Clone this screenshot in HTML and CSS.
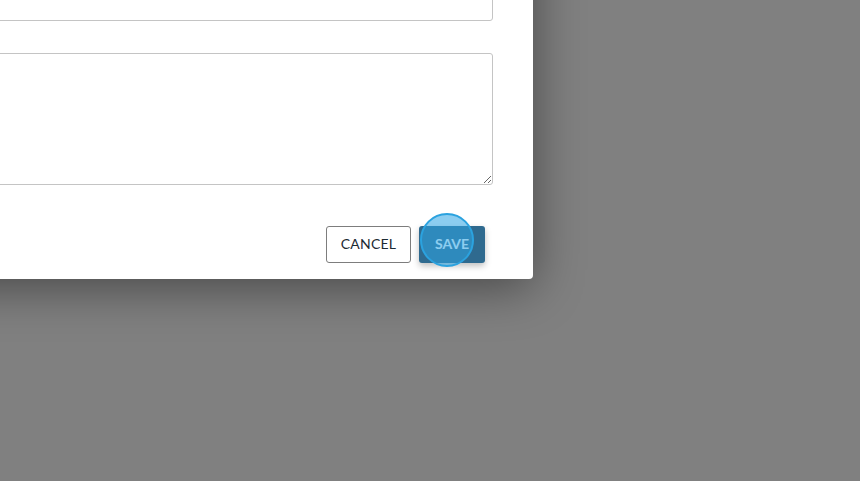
FILE: index.html
```html
<!DOCTYPE html>
<html lang="en">
<head>
  <meta charset="UTF-8">
  <meta name="viewport" content="width=device-width, initial-scale=1.0">
  <title>Edit item</title>
  <link rel="stylesheet" href="styles.css">
</head>
<body>

  <div class="backdrop"></div>

  <div class="modal">
    <form class="modal-form">
      <input class="field" type="text">
      <textarea class="field field-area"></textarea>

      <div class="actions">
        <button type="button" class="btn btn-cancel">CANCEL</button>
        <button type="button" class="btn btn-save">
          SAVE
          <span class="click-marker"></span>
        </button>
      </div>
    </form>
  </div>

</body>
</html>
```

FILE: styles.css
```css
* {
  margin: 0;
  padding: 0;
  box-sizing: border-box;
}

body {
  font-family: Lato, "Noto Sans", Arial, sans-serif;
  background-color: #808080;
  width: 860px;
  height: 481px;
  overflow: hidden;
  position: relative;
}

.backdrop {
  position: absolute;
  inset: 0;
  background-color: #808080;
}

.modal {
  position: absolute;
  left: -100px;
  top: -100px;
  width: 633px;
  background-color: #ffffff;
  border-radius: 4px;
  box-shadow: 0 8px 50px rgba(0, 0, 0, 0.45);
  padding: 64px 40px 16px 40px;
}

.modal-form {
  display: flex;
  flex-direction: column;
}

.field {
  display: block;
  width: 100%;
  height: 57px;
  border: 1px solid #c4c4c4;
  border-radius: 3px;
  background: #fff;
  font-family: inherit;
  font-size: 14px;
  outline: none;
}

.field-area {
  height: 132px;
  margin-top: 32px;
  resize: vertical;
}

.actions {
  display: flex;
  justify-content: flex-end;
  gap: 8px;
  margin-top: 41px;
  margin-right: 8px;
}

.btn {
  height: 37px;
  border-radius: 3px;
  font-family: inherit;
  font-size: 14px;
  line-height: 1;
  padding-bottom: 2px;
  cursor: pointer;
}

.btn-cancel {
  width: 85px;
  background: #fff;
  border: 1px solid #7d7d7d;
  color: #1c2a33;
  letter-spacing: 0.2px;
}

.btn-save {
  position: relative;
  width: 66px;
  background: #2f6a8f;
  border: none;
  color: #ffffff;
  font-weight: 700;
  box-shadow: 0 3px 6px rgba(0, 0, 0, 0.25);
}

.click-marker {
  position: absolute;
  left: 1px;
  top: -13px;
  width: 54px;
  height: 54px;
  border-radius: 50%;
  border: 2px solid #2ba2df;
  background: rgba(46, 164, 228, 0.55);
}
```
